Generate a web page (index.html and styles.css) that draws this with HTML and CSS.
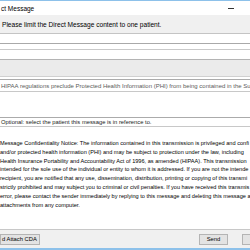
FILE: index.html
```html
<!DOCTYPE html>
<html lang="en">
<head>
  <meta charset="UTF-8">
  <title>Direct Message</title>
  <link rel="stylesheet" href="styles.css">
</head>
<body>
  <div class="window">
    <div class="titlebar">
      <span class="title">ct Message</span>
      <span class="min-btn"></span>
    </div>
    <div class="notice">Please limit the Direct Message content to one patient.</div>

    <div class="form">
      <div class="to-field"></div>
      <div class="cc-field"></div>
      <div class="subject-field">HIPAA regulations preclude Protected Health Information (PHI) from being contained in the Sub</div>
      <div class="patient-field">Optional: select the patient this message is in reference to.</div>
      <div class="body-text">
        <div>Message Confidentiality Notice: The information contained in this transmission is privileged and confi</div>
        <div>and/or protected health information (PHI) and may be subject to protection under the law, including</div>
        <div>Health Insurance Portability and Accountability Act of 1996, as amended (HIPAA). This transmission</div>
        <div>intended for the sole use of the individual or entity to whom it is addressed. If you are not the intende</div>
        <div>recipient, you are notified that any use, dissemination, distribution, printing or copying of this transmi</div>
        <div>strictly prohibited and may subject you to criminal or civil penalties. If you have received this transmis</div>
        <div>error, please contact the sender immediately by replying to this message and deleting this message a</div>
        <div>attachments from any computer.</div>
      </div>
    </div>

    <div class="button-bar">
      <button class="btn btn-attach">d Attach CDA</button>
      <span class="spacer"></span>
      <button class="btn btn-send">Send</button>
      <button class="btn btn-cancel"></button>
    </div>
  </div>
</body>
</html>
```

FILE: styles.css
```css
html, body {
  margin: 0;
  padding: 0;
}
body {
  width: 250px;
  height: 250px;
  overflow: hidden;
  background-color: #FFFFFF;
  font-family: 'Liberation Sans', Arial, sans-serif;
  color: #000;
}
.window {
  width: 250px;
  height: 250px;
  display: flex;
  flex-direction: column;
  border-top: 1px solid #8DC1EA;
  border-bottom: 2px solid #8DC1EA;
  box-sizing: border-box;
  overflow: hidden;
}
.titlebar {
  height: 14px;
  flex: none;
  display: flex;
  align-items: center;
  background-color: #FFFFFF;
  font-size: 6.5px;
  padding-left: 1px;
}
.title {
  flex: 1;
  white-space: nowrap;
}
.min-btn {
  width: 6px;
  height: 1px;
  background-color: #333;
  margin-right: 16px;
}
.notice {
  height: 18px;
  flex: none;
  display: flex;
  align-items: center;
  background-color: #F0F0F0;
  border-bottom: 1px solid #C4C4C4;
  font-size: 6.6px;
  padding-left: 2px;
  white-space: nowrap;
}
.form {
  flex: 1;
  display: flex;
  flex-direction: column;
  background-color: #FFFFFF;
  min-height: 0;
}
.to-field {
  margin-top: 9px;
  height: 5px;
  flex: none;
  border-top: 1px solid #A9A9A9;
  border-bottom: 1px solid #C9C9C9;
}
.cc-field {
  margin-top: 9px;
  height: 16px;
  flex: none;
  background-color: #EBEBEB;
  border-top: 1px solid #B4B4B4;
  border-bottom: 1px solid #D0D0D0;
}
.subject-field,
.patient-field {
  flex: none;
  display: flex;
  align-items: center;
  white-space: nowrap;
  overflow: hidden;
  border-top: 1px solid #ABABAB;
  border-bottom: 1px solid #C8C8C8;
  color: #5A5A5A;
  padding-left: 1px;
}
.subject-field {
  margin-top: 2px;
  height: 11px;
  font-size: 6px;
}
.patient-field {
  margin-top: 25px;
  height: 8px;
  font-size: 5.8px;
  color: #222;
}
.body-text {
  margin-top: 12px;
  font-size: 5.6px;
  line-height: 8.8px;
  white-space: nowrap;
  overflow: hidden;
}
.button-bar {
  height: 18px;
  flex: none;
  display: flex;
  align-items: center;
  background-color: #F0F0F0;
  border-top: 1px solid #C8C8C8;
}
.spacer {
  flex: 1;
}
.btn {
  height: 11px;
  padding: 0 3px;
  border: 1px solid #B4B4B4;
  background-color: #E3E3E3;
  font-family: inherit;
  font-size: 5.8px;
  color: #000;
  white-space: nowrap;
  box-sizing: border-box;
}
.btn-attach {
  width: 40px;
  text-align: left;
  padding-left: 1px;
}
.btn-send {
  width: 29px;
  margin-right: 14px;
}
.btn-cancel {
  width: 29px;
  flex: none;
  margin-right: -21px;
}
```
